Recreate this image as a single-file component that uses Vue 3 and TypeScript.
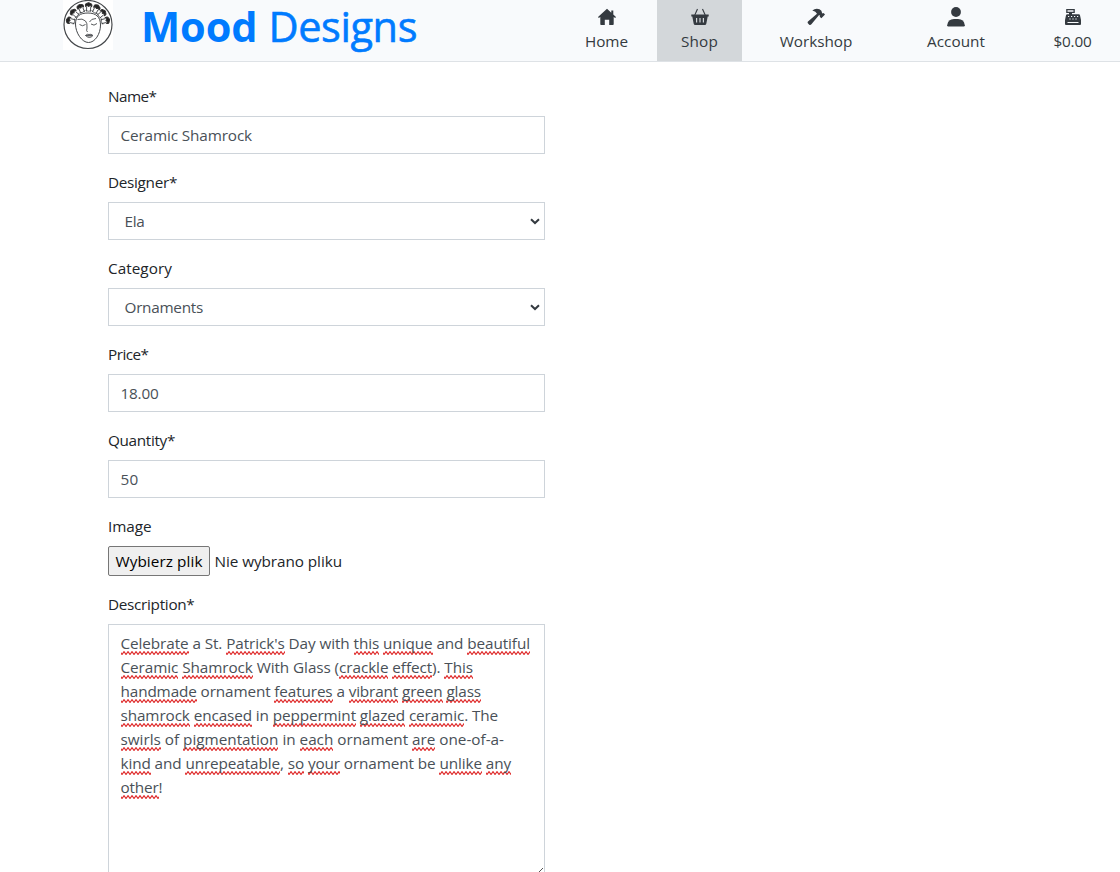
<script setup lang="ts">
import type { Directive } from 'vue'

// Spreads the letters of a run so that it takes up the given width.
const vFit: Directive<HTMLElement, number> = {
  mounted(el, { value }) {
    const natural = el.getBoundingClientRect().width
    const count = (el.textContent ?? '').length
    el.style.letterSpacing = `${(value - natural) / count}px`
  },
}

interface Field { label: string; labelWidth: number; value: string; valueWidth: number; select?: boolean }
const fields: Field[] = [
  { label: 'Name*', labelWidth: 48.5, value: 'Ceramic Shamrock', valueWidth: 131.5 },
  { label: 'Designer*', labelWidth: 69, value: 'Ela', valueWidth: 20, select: true },
  { label: 'Category', labelWidth: 64, value: 'Ornaments', valueWidth: 78.5, select: true },
  { label: 'Price*', labelWidth: 40.5, value: '18.00', valueWidth: 38 },
  { label: 'Quantity*', labelWidth: 67, value: '50', valueWidth: 18 },
]

// Words between underscores are flagged by the spell checker.
const source: [string, number][] = [
  ["_Celebrate_ a St. _Patrick's_ Day with _this_ _unique_ and _beautiful_", 409.5],
  ['_Ceramic_ _Shamrock_ With Glass (_crackle_ _effect_). _This_', 352.5],
  ['_handmade_ ornament _features_ a _vibrant_ _green_ _glass_', 360.5],
  ['_shamrock_ _encased_ in _peppermint_ _glazed_ _ceramic_. The', 377.5],
  ['_swirls_ of _pigmentation_ in _each_ ornament _are_ one-of-a-', 383.5],
  ['_kind_ and _unrepeatable_, _so_ _your_ ornament be _unlike_ _any_', 390.5],
  ['_other_!', 42],
]
const lines = source.map(([text, width]) => ({
  width,
  parts: text.split('_').map((t, i) => ({ t, bad: i % 2 === 1 })).filter((p) => p.t),
}))
</script>

<template>
  <div class="page">
    <header class="navbar">
      <svg class="logo" viewBox="0 0 50 50" fill="none" stroke="#45484b">
        <rect width="50" height="50" fill="#fff" stroke="none" />
        <circle cx="25" cy="24.500" r="24" stroke-width="1.200" />
        <path d="M12.500 24C12.500 16 17 13 25 13S37.500 17 37.500 25C37.500 34 32 42.500 25.500 42.500S12.500 33 12.500 24Z" stroke-width="1" />
        <path d="M14.500 19.500q5-1.500 8 1.500q2 2 1.500 7q-1 3 .5 4M26.500 22q1.500-3.500 6.500-3.500M16.500 24.500q3 2.500 6 0M28 24q3 2.500 6-.5" stroke-width=".9" />
        <path d="M22.500 35.500q2-2 3.500-1q2-1 4 1q-3.500 4-7.500 0Zm0 0h7" stroke-width=".8" fill="#bbb" />
        <g v-for="a in [-76, -49, -23, 2, 27, 51, 76]" :key="a" :transform="`rotate(${a} 25 25)`">
          <path d="M23 11.500V7M27 11.500V7" stroke-width=".9" />
          <path d="M22 6.500q-1-2.500 1-3q2-1.500 3.500 0q2.500.5 1.500 3l-1.500-1-1.500 1-1.500-1Z" fill="#222" stroke="#333" stroke-width="1" />
          <path d="M22 10.500q3 1.500 6 0" stroke-width=".8" />
        </g>
      </svg>
      <div class="brand"><b v-fit="116.5">Mood</b><span class="brand-light" v-fit="148.5">Designs</span></div>
      <nav>
        <a class="item home">
          <svg viewBox="0 0 18 18"><path d="M9 .7 0 9l.8.9L2.300 9v7.200q0 .8.8.8h3.700v-5.300h4.400V17h3.700q.8 0 .8-.8V9l1.500.9L18 9l-2.700-2.500V2.500h-2v2.200Z" /></svg>
          <span v-fit="43">Home</span>
        </a>
        <a class="item shop">
          <svg viewBox="0 0 18 18"><path d="M6.500 1 3.800 7M11.500 1l2.700 6" fill="none" stroke="#343a40" stroke-width="1.100" /><path fill-rule="evenodd" d="M.3 6.500h17.400v2h-1L15.300 15.700q-.3 1.300-1.500 1.300H4.200q-1.200 0-1.500-1.300L1.300 8.500h-1ZM5 10v4.500h1.200V10Zm3.400 0v4.500h1.200V10Zm3.400 0v4.500h1.200V10Z" /></svg>
          <span v-fit="37">Shop</span>
        </a>
        <a class="item workshop">
          <svg viewBox="0 0 18 18"><path d="M5.300 2.500Q8.500-.2 12.500 1.200q2.600 1.300 2.500 3.800l.8.6.8-.5L18 6.500l-3.600 3.700-1.700-1.500.3-1-.9-.8-7.700 9.300q-1.200 1.300-2.400.2l-.9-.9q-1.100-1.200.2-2.300L10 5.700Q9 3.300 5.300 2.500Z" /></svg>
          <span v-fit="72.5">Workshop</span>
        </a>
        <a class="item account">
          <svg class="person" viewBox="0 0 18 20"><circle cx="9" cy="5" r="4.900" /><path d="M.2 18.300Q1 12 7 12h4q6 0 6.800 6.300 0 1.200-1.200 1.200H1.400Q.2 19.500.2 18.300Z" /></svg>
          <span v-fit="58">Account</span>
        </a>
        <a class="item cart">
          <svg viewBox="0 0 18 18"><path fill-rule="evenodd" d="M2.200 1h8.600v4H8v1.300h6.800q1 0 1.200 1L17 12v4q0 1-1 1H2q-1 0-1-1v-4l1-4.700q.2-1 1.200-1H5V5H2.200Zm1.300 1.300v1.400h6V2.300ZM4 8v1.100h1.200V8Zm3 0v1.100h1.200V8Zm3 0v1.100h1.200V8Zm3 0v1.100h1.200V8ZM5.400 10.500v1.100h1.200v-1.100Zm3 0v1.100h1.200v-1.100Zm3 0v1.100h1.200v-1.100ZM3.500 14v1.100h11V14Z" /></svg>
          <span v-fit="38">$0.00</span>
        </a>
      </nav>
    </header>

    <main class="form">
      <div v-for="f in fields" :key="f.label" class="group">
        <label><span v-fit="f.labelWidth">{{ f.label }}</span></label>
        <div class="control" :class="{ select: f.select }">
          <span v-fit="f.valueWidth">{{ f.value }}</span>
          <svg v-if="f.select" class="chevron" viewBox="0 0 10 7"><path d="M1 1.200 5 5l4-3.800" fill="none" stroke="#343a40" stroke-width="2" /></svg>
        </div>
      </div>
      <div class="group">
        <label><span v-fit="43.5">Image</span></label>
        <div class="file">
          <button type="button"><span v-fit="87">Wybierz plik</span></button>
          <span v-fit="127.5">Nie wybrano pliku</span>
        </div>
      </div>
      <div class="group">
        <label><span v-fit="86.5">Description*</span></label>
        <div class="control area">
          <div v-for="(line, i) in lines" :key="i" class="line">
            <span v-fit="line.width"><span v-for="(p, j) in line.parts" :key="j" :class="{ bad: p.bad }">{{ p.t }}</span></span>
          </div>
          <svg class="grip" viewBox="0 0 8 8"><path d="M1 8 8 1M5 8l3-3" stroke="#555" stroke-width="1" /></svg>
        </div>
      </div>
    </main>
  </div>
</template>

<style>
body { margin: 0; overflow: hidden; background: #fff; }
</style>

<style scoped>
.page {
  box-sizing: border-box;
  width: 1120px;
  height: 872px;
  overflow: hidden;
  background: #fff;
  color: #212529;
  font: 15.300px/24px "Open Sans", "Noto Sans", sans-serif;
  font-kerning: normal;
}
span, b { white-space: pre; }
.navbar {
  box-sizing: border-box;
  display: flex;
  height: 62px;
  padding-left: 63px;
  background: #f8fafc;
  border-bottom: 1px solid #dee2e6;
}
.logo { width: 50px; height: 50px; flex: none; }
.brand {
  box-sizing: border-box;
  display: flex;
  flex: none;
  gap: 11px;
  width: 417px;
  margin-left: 26px;
  padding-left: 2px;
  color: #007bff;
  font-size: 41.500px;
  line-height: 53px;
}
.brand b { font-weight: 700; }
.brand-light { font-weight: 400; -webkit-text-stroke: 0.6px #007bff; }
nav { display: flex; flex: none; height: 61px; }
.item {
  display: flex;
  flex: none;
  flex-direction: column;
  align-items: center;
  box-sizing: border-box;
  padding-top: 8px;
  color: #343a40;
}
.item svg { width: 18px; height: 18px; fill: #343a40; margin-bottom: 3px; }
.item .person { height: 20px; margin: -1px 0 2px; }
.home { width: 101px; }
.shop { width: 85px; background: #d3d7da; }
.workshop { width: 148px; }
.account { width: 132px; }
.cart { width: 101px; }
.form { width: 437px; margin: 22px 0 0 108px; }
.group { margin-bottom: 16px; }
label { display: flex; height: 24px; margin-bottom: 8px; }
.control {
  box-sizing: border-box;
  display: flex;
  justify-content: space-between;
  align-items: center;
  height: 38px;
  padding: 6px 12px 6px 11.500px;
  border: 1px solid #ced4da;
  color: #495057;
}
.select { padding: 6px 4px 6px 15.500px; }
.chevron { width: 10px; height: 7px; }
.file { display: flex; align-items: center; gap: 4.500px; height: 30px; }
button {
  box-sizing: border-box;
  width: 102px;
  height: 30px;
  padding: 0 0 0 6.500px;
  border: 1px solid #767676;
  border-radius: 2px;
  background: #efefef;
  color: #000;
  font: inherit;
  text-align: left;
}
.area { position: relative; display: block; height: 260px; }
.line { height: 24px; white-space: nowrap; }
.bad {
  display: inline-block;
  height: 24px;
  vertical-align: top;
  background: url("data:image/svg+xml,%3Csvg xmlns='http://www.w3.org/2000/svg' width='4' height='4'%3E%3Cpath d='M-1 0 1 3 3 0 5 3' transform='translate(0 .6)' fill='none' stroke='%23e03030' stroke-width='1.1'/%3E%3C/svg%3E") 0 100% / 4px 4px repeat-x;
}
.grip { position: absolute; right: 1px; top: 242px; width: 8px; height: 8px; }
</style>
